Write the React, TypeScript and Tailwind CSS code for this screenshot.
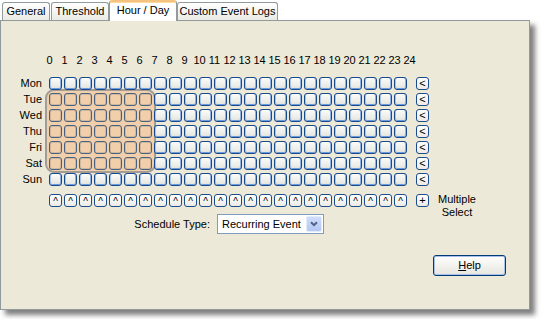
import React from 'react';

const days = ['Mon', 'Tue', 'Wed', 'Thu', 'Fri', 'Sat', 'Sun'];
const hours = Array.from({ length: 25 }, (_, i) => i);
const cols = Array.from({ length: 24 }, (_, i) => i);

function Cell({ sel }: { sel: boolean }) {
  if (sel)
    return (
      <div className="relative z-10 w-[13px] h-[13px] rounded-[3px] border border-[#48617e] shadow-[inset_0_0_0_1px_rgba(110,110,125,0.25)]" />
    );
  return (
    <div className="relative z-10 w-[13px] h-[13px] rounded-[3px] border border-[#184a8a] bg-gradient-to-b from-[#fbfbfb] to-[#e4e4de] shadow-[inset_1px_0_0_#a6c3f0,inset_-1px_0_0_#8fb1ea,inset_0_-1px_0_#6e9ade,inset_0_1px_0_#ffffff]" />
  );
}

function SmallBtn({ children, pt }: { children: React.ReactNode; pt?: string }) {
  return (
    <div
      className={`w-[13px] h-[13px] shrink-0 rounded-[3px] border border-[#1b4d8c] bg-gradient-to-b from-white to-[#ecebe6] flex justify-center text-[11px] leading-[11px] text-black ${pt ?? 'items-center'}`}
    >
      {children}
    </div>
  );
}

export default function App() {
  return (
    <div className="w-[543px] h-[319px] bg-white overflow-hidden text-black text-[11px] [font-family:'Liberation_Sans',Arial,sans-serif]">
      {/* Tabs */}
      <div className="relative z-10 flex items-start h-[20px] pl-[2px]">
        <div className="mt-[2px] h-[18px] w-[48px] rounded-t-[3px] border border-b-0 border-[#919b9c] bg-gradient-to-b from-white to-[#ebeae4] flex items-center justify-center">
          General
        </div>
        <div className="ml-[1px] mt-[2px] h-[18px] w-[58px] rounded-t-[3px] border border-b-0 border-[#919b9c] bg-gradient-to-b from-white to-[#ebeae4] flex items-center justify-center">
          Threshold
        </div>
        <div className="h-[21px] w-[68px] rounded-t-[3px] border-x border-[#919b9c] border-t-2 border-t-[#f3c27f] bg-white shadow-[inset_0_1px_0_#ffd99e] flex justify-center leading-[16px]">
          Hour / Day
        </div>
        <div className="mt-[2px] h-[18px] w-[101px] rounded-t-[3px] border border-b-0 border-[#919b9c] bg-gradient-to-b from-white to-[#ebeae4] flex items-center justify-center">
          Custom Event Logs
        </div>
      </div>

      {/* Panel */}
      <div className="w-[530px] h-[290px] border border-[#919b9c] bg-[#ece9d8] shadow-[5px_5px_5px_rgba(0,0,0,0.5)]">
        {/* hour labels */}
        <div className="mt-[33px] ml-[41px] flex h-[12px] leading-[12px]">
          {hours.map((h) => (
            <div key={h} className="w-[15px] shrink-0 text-center">
              {h}
            </div>
          ))}
        </div>

        {/* day grid */}
        <div className="relative mt-[11px] flex flex-col gap-[3px]">
          <div className="absolute left-[44px] top-[12px] w-[111px] h-[84px] rounded-[9px] border-2 border-[#a39c94] bg-[#f1cfab]" />
          {days.map((d, r) => (
            <div key={d} className="flex items-center h-[13px]">
              <div className="w-[41px] text-right leading-[13px]">{d}</div>
              <div className="ml-[7px] flex gap-[2px]">
                {cols.map((c) => (
                  <Cell key={c} sel={r >= 1 && r <= 5 && c <= 6} />
                ))}
              </div>
              <div className="ml-[9px]">
                <SmallBtn>&lt;</SmallBtn>
              </div>
            </div>
          ))}
        </div>

        {/* column select row */}
        <div className="mt-[8px] flex items-start h-[13px]">
          <div className="ml-[48px] flex gap-[2px]">
            {cols.map((c) => (
              <SmallBtn key={c} pt="items-start pt-[1px]">
                <span className="text-[10px]">^</span>
              </SmallBtn>
            ))}
          </div>
          <div className="ml-[9px]">
            <SmallBtn>+</SmallBtn>
          </div>
          <div className="ml-[8px] -mt-[1px] h-[13px] w-[40px] text-center leading-[13px]">
            Multiple
            <br />
            Select
          </div>
        </div>

        {/* schedule type */}
        <div className="mt-[7px] flex items-center h-[20px]">
          <div className="ml-[127px] w-[82px] text-right">Schedule Type:</div>
          <div className="ml-[7px] w-[107px] h-[20px] border border-[#7f9db9] bg-white flex items-center pl-[4px] pr-[1px]">
            <span className="flex-1">Recurring Event</span>
            <div className="w-[16px] h-[16px] rounded-[2px] border border-[#e3ebfd] bg-gradient-to-b from-[#cfdcfc] to-[#b3c8f4] flex items-center justify-center">
              <svg width="8" height="6" viewBox="0 0 8 6">
                <path d="M1 1.2 L4 4.2 L7 1.2" fill="none" stroke="#4d6185" strokeWidth="2" />
              </svg>
            </div>
          </div>
        </div>

        {/* help */}
        <div className="mt-[21px] ml-[432px] w-[73px] h-[21px] rounded-[3px] border border-[#003c74] bg-gradient-to-b from-white to-[#e6e5de] shadow-[inset_0_0_0_1px_#a9c0ec] flex items-center justify-center">
          <span>
            <span className="underline">H</span>elp
          </span>
        </div>
      </div>
    </div>
  );
}
